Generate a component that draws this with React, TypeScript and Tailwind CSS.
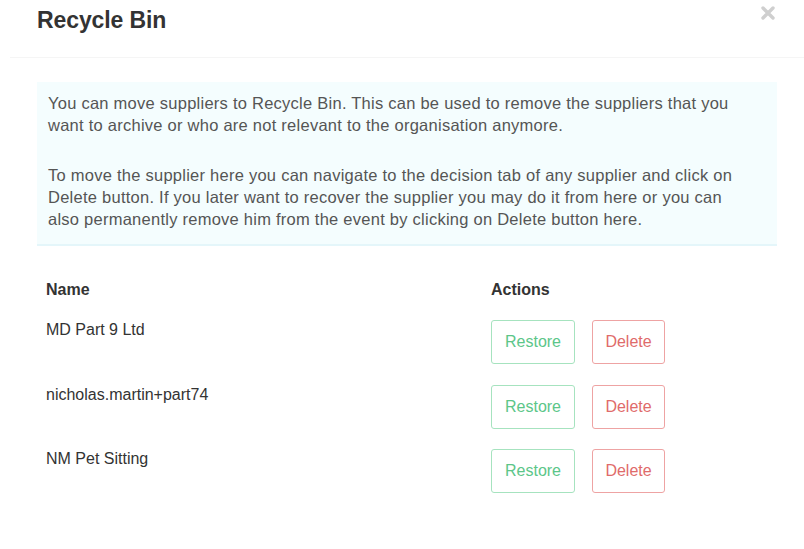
import React from "react";

const rows = ["MD Part 9 Ltd", "nicholas.martin+part74", "NM Pet Sitting"];

export default function App() {
  return (
    <div
      className="w-[804px] h-[549px] bg-white overflow-hidden text-[#444]"
      style={{ fontFamily: '"Liberation Sans", Arial, sans-serif' }}
    >
      <div className="ml-[10px] border-b border-[#f5f5f5] pb-[24px] pt-[7px]">
        <div className="flex items-start justify-between pl-[27px] pr-[29px]">
          <h1 className="text-[23px] leading-[26px] font-bold text-[#333] tracking-[-0.1px]">
            Recycle Bin
          </h1>
          <svg width="14" height="14" viewBox="0 0 14 14" className="mt-[-1px]">
            <path d="M2 2 L12 12 M12 2 L2 12" stroke="#cfcfcf" strokeWidth="3.4" strokeLinecap="round" />
          </svg>
        </div>
      </div>

      <div className="ml-[37px] mr-[27px] mt-[24px] bg-[#f4fdfe] border-b-2 border-[#e4f6fa] pt-[10px] pb-[14px] pl-[11px] pr-[36px] text-[16.5px] leading-[22px] tracking-[0.25px] text-[#555]">
        <p>
          You can move suppliers to Recycle Bin. This can be used to remove the suppliers that you
          want to archive or who are not relevant to the organisation anymore.
        </p>
        <p className="mt-[28px]">
          To move the supplier here you can navigate to the decision tab of any supplier and click on
          Delete button. If you later want to recover the supplier you may do it from here or you can
          also permanently remove him from the event by clicking on Delete button here.
        </p>
      </div>

      <div className="ml-[46px] mt-[33px]">
        <div className="grid grid-cols-[445px_1fr] h-[40px] text-[16px] leading-[22px] font-bold text-[#333]">
          <div>Name</div>
          <div>Actions</div>
        </div>
        {rows.map((name) => (
          <div key={name} className="grid grid-cols-[445px_1fr] h-[64.5px] items-start">
            <div className="text-[16px] leading-[22px] text-[#333]">{name}</div>
            <div className="flex gap-[17px] mt-px">
              <button className="h-[44px] w-[84px] rounded-[3px] border border-[#a6e3bf] bg-white text-[16px] text-[#5cc689]">
                Restore
              </button>
              <button className="h-[44px] w-[73px] rounded-[3px] border border-[#eea3a3] bg-white text-[16px] text-[#df6b6b]">
                Delete
              </button>
            </div>
          </div>
        ))}
      </div>
    </div>
  );
}
